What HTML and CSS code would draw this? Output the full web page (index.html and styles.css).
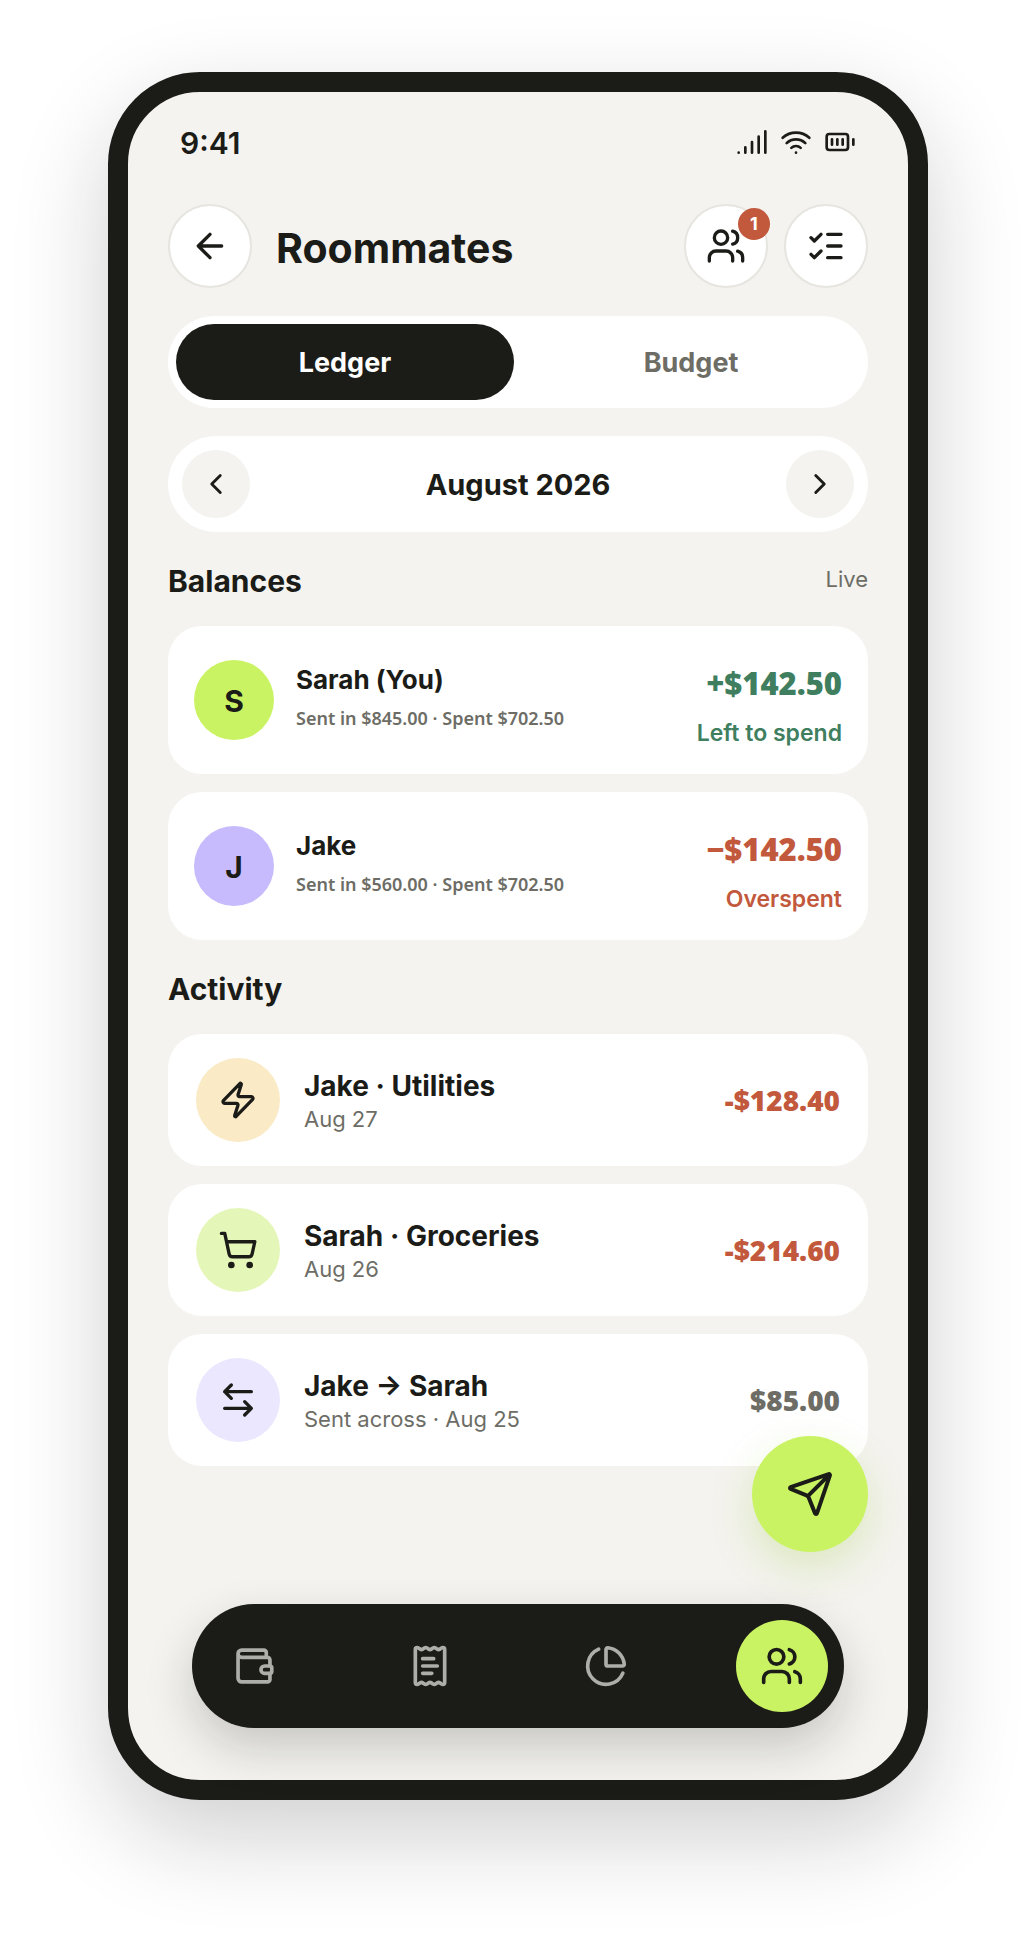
FILE: index.html
```html
<!DOCTYPE html>
<html lang="en">
<head>
  <meta charset="UTF-8" />
  <meta name="viewport" content="width=device-width, initial-scale=1.0"/>
  <title>Roommates</title>
  <link rel="stylesheet" href="styles.css">
</head>
<body>
  <div class="phone">
    <!-- Status bar -->
    <div class="status-bar">
      <span class="time">9:41</span>
      <div class="status-icons">
        <svg class="icon icon-sm" viewBox="0 0 24 24"><path d="M2 20h.01M7 20v-4M12 20v-8M17 20V8M22 4v16"/></svg>
        <svg class="icon icon-sm" viewBox="0 0 24 24"><path d="M12 20h.01M2 8.82a15 15 0 0 1 20 0M5 12.86a10 10 0 0 1 14 0M8.5 16.43a5 5 0 0 1 7 0"/></svg>
        <svg class="icon icon-sm" viewBox="0 0 24 24"><rect x="2" y="6" width="16" height="12" rx="2"/><path d="M6 10v4M10 10v4M14 10v4M22 10v4"/></svg>
      </div>
    </div>

    <header class="header">
      <button class="round-btn" type="button" aria-label="Back">
        <svg class="icon" viewBox="0 0 24 24"><path d="M12 19l-7-7 7-7M19 12H5"/></svg>
      </button>
      <h1>Roommates</h1>
      <button class="round-btn" type="button" aria-label="Members">
        <svg class="icon" viewBox="0 0 24 24"><path d="M16 21v-2a4 4 0 0 0-4-4H6a4 4 0 0 0-4 4v2"/><circle cx="9" cy="7" r="4"/><path d="M22 21v-2a4 4 0 0 0-3-3.87M16 3.13a4 4 0 0 1 0 7.75"/></svg>
        <span class="badge">1</span>
      </button>
      <button class="round-btn" type="button" aria-label="Tasks">
        <svg class="icon" viewBox="0 0 24 24"><path d="M13 5h8M13 12h8M13 19h8M3 17l2 2 4-4M3 7l2 2 4-4"/></svg>
      </button>
    </header>

    <main class="content">
      <div class="tabs">
        <button class="tab active" type="button">Ledger</button>
        <button class="tab" type="button">Budget</button>
      </div>

      <div class="month">
        <button class="month-btn" type="button" aria-label="Previous month">
          <svg class="icon icon-chevron" viewBox="0 0 24 24"><path d="M15 18l-6-6 6-6"/></svg>
        </button>
        <span class="month-name">August 2026</span>
        <button class="month-btn" type="button" aria-label="Next month">
          <svg class="icon icon-chevron" viewBox="0 0 24 24"><path d="M9 18l6-6-6-6"/></svg>
        </button>
      </div>

      <div class="section-head">
        <h2>Balances</h2>
        <span class="live">Live</span>
      </div>
      <div class="list">
        <div class="card balance">
          <div class="avatar lime">S</div>
          <div class="info">
            <div class="person">Sarah (You)</div>
            <div class="totals">Sent in $845.00 · Spent $702.50</div>
          </div>
          <div class="result positive">
            <div class="result-amount">+$142.50</div>
            <div class="result-label">Left to spend</div>
          </div>
        </div>
        <div class="card balance">
          <div class="avatar purple">J</div>
          <div class="info">
            <div class="person">Jake</div>
            <div class="totals">Sent in $560.00 · Spent $702.50</div>
          </div>
          <div class="result negative">
            <div class="result-amount">−$142.50</div>
            <div class="result-label">Overspent</div>
          </div>
        </div>
      </div>

      <div class="section-head">
        <h2>Activity</h2>
      </div>
      <div class="list">
        <div class="card entry">
          <div class="entry-icon utilities">
            <svg class="icon" viewBox="0 0 24 24"><path d="M4 14a1 1 0 0 1-.78-1.63l9.9-10.2a.5.5 0 0 1 .86.46l-1.92 6.02A1 1 0 0 0 13 10h7a1 1 0 0 1 .78 1.63l-9.9 10.2a.5.5 0 0 1-.86-.46l1.92-6.02A1 1 0 0 0 11 14z"/></svg>
          </div>
          <div class="info">
            <div class="entry-title">Jake · Utilities</div>
            <div class="entry-date">Aug 27</div>
          </div>
          <div class="entry-amount negative">-$128.40</div>
        </div>
        <div class="card entry">
          <div class="entry-icon groceries">
            <svg class="icon" viewBox="0 0 24 24"><circle class="dot" cx="8" cy="21" r="1"/><circle class="dot" cx="19" cy="21" r="1"/><path d="M2.05 2.05h2l2.66 12.42a2 2 0 0 0 2 1.58h9.78a2 2 0 0 0 1.95-1.57l1.65-7.43H5.12"/></svg>
          </div>
          <div class="info">
            <div class="entry-title">Sarah · Groceries</div>
            <div class="entry-date">Aug 26</div>
          </div>
          <div class="entry-amount negative">-$214.60</div>
        </div>
        <div class="card entry">
          <div class="entry-icon transfer">
            <svg class="icon" viewBox="0 0 24 24"><path d="M8 3L4 7l4 4M4 7h16M16 21l4-4-4-4M20 17H4"/></svg>
          </div>
          <div class="info">
            <div class="entry-title">Jake → Sarah</div>
            <div class="entry-date">Sent across · Aug 25</div>
          </div>
          <div class="entry-amount">$85.00</div>
        </div>
      </div>
    </main>

    <button class="fab" type="button" aria-label="Send money">
      <svg class="icon icon-lg" viewBox="0 0 24 24"><path d="M14.54 21.69a.5.5 0 0 0 .93-.03l6.5-19a.5.5 0 0 0-.63-.63l-19 6.5a.5.5 0 0 0-.03.93l7.93 3.18a2 2 0 0 1 1.11 1.11zM21.85 2.15L10.91 13.09"/></svg>
    </button>

    <!-- Bottom navigation -->
    <nav class="nav">
      <a class="nav-item" href="#" aria-label="Wallet">
        <svg class="icon icon-md" viewBox="0 0 24 24"><path d="M18.7 7.3V4.6a1.3 1.3 0 0 0-1.3-1.3H5.3a2 2 0 0 0 0 4h14a1.4 1.4 0 0 1 1.4 1.4V12M20.7 16v3.3a1.4 1.4 0 0 1-1.4 1.4H5.3a2 2 0 0 1-2-2V5.3"/><path d="M17.8 12h3.1a.8.8 0 0 1 .8.8v2.4a.8.8 0 0 1-.8.8h-3.1a2 2 0 0 1 0-4z"/></svg>
      </a>
      <a class="nav-item" href="#" aria-label="Bills">
        <svg class="icon icon-md" viewBox="0 0 24 24"><path d="M4 3a1 1 0 0 1 1-1 1.3 1.3 0 0 1 .7.2l.933.6a1.3 1.3 0 0 0 1.4 0l.934-.6a1.3 1.3 0 0 1 1.4 0l.933.6a1.3 1.3 0 0 0 1.4 0l.933-.6a1.3 1.3 0 0 1 1.4 0l.934.6a1.3 1.3 0 0 0 1.4 0l.933-.6A1.3 1.3 0 0 1 19 2a1 1 0 0 1 1 1v18a1 1 0 0 1-1 1 1.3 1.3 0 0 1-.7-.2l-.933-.6a1.3 1.3 0 0 0-1.4 0l-.934.6a1.3 1.3 0 0 1-1.4 0l-.933-.6a1.3 1.3 0 0 0-1.4 0l-.933.6a1.3 1.3 0 0 1-1.4 0l-.934-.6a1.3 1.3 0 0 0-1.4 0l-.933.6a1.3 1.3 0 0 1-.7.2 1 1 0 0 1-1-1z"/><path d="M14 8H8M16 12H8M13 16H8"/></svg>
      </a>
      <a class="nav-item" href="#" aria-label="Reports">
        <svg class="icon icon-md" viewBox="0 0 24 24"><path d="M21 12c.552 0 1.005-.449.95-.998a10 10 0 0 0-8.953-8.951c-.55-.055-.998.398-.998.95v8a1 1 0 0 0 1 1z"/><path d="M21.21 15.89A10 10 0 1 1 8 2.83"/></svg>
      </a>
      <a class="nav-item active" href="#" aria-label="Roommates">
        <svg class="icon icon-md" viewBox="0 0 24 24"><path d="M16 21v-2a4 4 0 0 0-4-4H6a4 4 0 0 0-4 4v2"/><circle cx="9" cy="7" r="4"/><path d="M22 21v-2a4 4 0 0 0-3-3.87M16 3.13a4 4 0 0 1 0 7.75"/></svg>
      </a>
    </nav>
  </div>
</body>
</html>
```

FILE: styles.css
```css
:root {
  --ink: #1b1b17;
  --muted: #6d6d66;
  --paper: #f4f3ef;
  --lime: #caf363;
  --green: #3f7f5f;
  --red: #c2593d;
}

* {
  box-sizing: border-box;
}

body {
  margin: 0;
  padding: 72px 108px 144px;
  background: #fff;
  font-family: Inter, "Liberation Sans", sans-serif;
  color: var(--ink);
}

h1, h2 {
  margin: 0;
}

button {
  padding: 0;
  border: none;
  font-family: inherit;
  color: inherit;
  cursor: pointer;
}

.phone {
  position: relative;
  display: flex;
  flex-direction: column;
  max-width: 820px;
  min-height: calc(100vh - 216px);
  margin: 0 auto;
  border: 20px solid var(--ink);
  border-radius: 92px;
  background: var(--paper);
  box-shadow: 0 36px 96px rgba(20, 20, 24, 0.2);
}

/* Icons */
.icon {
  display: block;
  width: 40px;
  height: 40px;
  fill: none;
  stroke: currentColor;
  stroke-width: 2;
  stroke-linecap: round;
  stroke-linejoin: round;
}

.icon-sm {
  width: 32px;
  height: 32px;
}

.icon-chevron {
  width: 34px;
  height: 34px;
}

.icon-md {
  width: 44px;
  height: 44px;
}

.icon-lg {
  width: 48px;
  height: 48px;
}

.dot {
  fill: currentColor;
}

/* Top of the screen */
.status-bar {
  display: flex;
  align-items: center;
  justify-content: space-between;
  padding: 34px 52px 46px;
}

.time {
  padding-top: 2px;
  font-size: 30px;
  line-height: 30px;
  font-weight: 600;
}

.status-icons {
  display: flex;
  gap: 12px;
}

.header {
  display: flex;
  align-items: center;
  gap: 16px;
  padding: 0 40px;
}

.header h1 {
  flex: 1;
  padding: 4px 0 0 8px;
  font-size: 41px;
  line-height: 52px;
  font-weight: 700;
}

.round-btn {
  position: relative;
  display: flex;
  align-items: center;
  justify-content: center;
  width: 84px;
  height: 84px;
  border: 2px solid #e6e5e0;
  border-radius: 50%;
  background: #fff;
}

.badge {
  position: absolute;
  top: 2px;
  right: -4px;
  width: 32px;
  height: 32px;
  border-radius: 50%;
  background: var(--red);
  color: #fff;
  font-size: 18px;
  line-height: 32px;
  font-weight: 700;
  text-align: center;
}

.content {
  padding: 28px 40px 0;
}

/* Ledger / Budget */
.tabs {
  display: flex;
  gap: 8px;
  padding: 8px;
  border-radius: 46px;
  background: #fff;
}

.tab {
  flex: 1;
  height: 76px;
  border-radius: 38px;
  background: transparent;
  color: var(--muted);
  font-size: 27px;
  font-weight: 700;
}

.tab.active {
  background: var(--ink);
  color: #fff;
}

.month {
  display: flex;
  align-items: center;
  justify-content: space-between;
  margin-top: 28px;
  padding: 14px;
  border-radius: 48px;
  background: #fff;
}

.month-btn {
  display: flex;
  align-items: center;
  justify-content: center;
  width: 68px;
  height: 68px;
  border-radius: 50%;
  background: var(--paper);
}

.month-name {
  padding-top: 2px;
  font-size: 29px;
  line-height: 38px;
  font-weight: 700;
}

.section-head {
  display: flex;
  align-items: flex-start;
  justify-content: space-between;
  margin: 30px 0 26px;
}

.section-head h2 {
  font-size: 30px;
  line-height: 38px;
  font-weight: 700;
}

.live {
  color: var(--muted);
  font-size: 22px;
  line-height: 34px;
}

.list {
  display: flex;
  flex-direction: column;
  gap: 18px;
}

.card {
  display: flex;
  border-radius: 34px;
  background: #fff;
}

.info {
  flex: 1;
}

.positive {
  color: var(--green);
}

.negative {
  color: var(--red);
}

/* Balances */
.balance {
  align-items: flex-start;
  gap: 22px;
  padding: 34px 26px 26px;
}

.avatar {
  width: 80px;
  height: 80px;
  border-radius: 50%;
  font-size: 30px;
  line-height: 82px;
  font-weight: 700;
  text-align: center;
}

.lime {
  background: var(--lime);
}

.purple {
  background: #c7bbfd;
}

.person {
  font-size: 26px;
  line-height: 40px;
  font-weight: 700;
}

.totals {
  margin-top: 4px;
  color: var(--muted);
  font-family: "Noto Sans", sans-serif;
  font-size: 18px;
  line-height: 28px;
  font-weight: 600;
}

.result {
  text-align: right;
}

.result-amount {
  font-family: "Noto Sans", sans-serif;
  font-size: 31px;
  line-height: 46px;
  font-weight: 900;
}

.result-label {
  margin-top: 12px;
  font-size: 23px;
  line-height: 30px;
  font-weight: 600;
}

/* Activity */
.entry {
  align-items: center;
  gap: 24px;
  padding: 24px 28px;
}

.entry-icon {
  display: flex;
  align-items: center;
  justify-content: center;
  width: 84px;
  height: 84px;
  border-radius: 50%;
}

.utilities {
  background: #faeac6;
}

.groceries {
  background: #e5f6b9;
}

.transfer {
  background: #ebe7fe;
}

.entry-title {
  padding-top: 2px;
  font-size: 28px;
  line-height: 36px;
  font-weight: 700;
}

.entry-date {
  color: var(--muted);
  font-size: 22px;
  line-height: 30px;
}

.entry-amount {
  font-family: "Noto Sans", sans-serif;
  font-size: 28px;
  line-height: 36px;
  font-weight: 900;
}

.entry-amount:not(.negative) {
  color: var(--muted);
}

/* Floating button */
.fab {
  position: absolute;
  right: 40px;
  bottom: 228px;
  display: flex;
  align-items: center;
  justify-content: center;
  width: 116px;
  height: 116px;
  border-radius: 50%;
  background: var(--lime);
  box-shadow: 0 16px 40px rgba(150, 200, 50, 0.25);
}

.nav {
  display: flex;
  justify-content: space-between;
  margin: auto 64px 52px;
  padding: 16px;
  border-radius: 62px;
  background: var(--ink);
  box-shadow: 0 20px 48px rgba(27, 27, 23, 0.2);
}

.nav-item {
  display: flex;
  align-items: center;
  justify-content: center;
  width: 92px;
  height: 92px;
  border-radius: 50%;
  color: #adada9;
}

.nav-item.active {
  background: var(--lime);
  color: var(--ink);
}
```
